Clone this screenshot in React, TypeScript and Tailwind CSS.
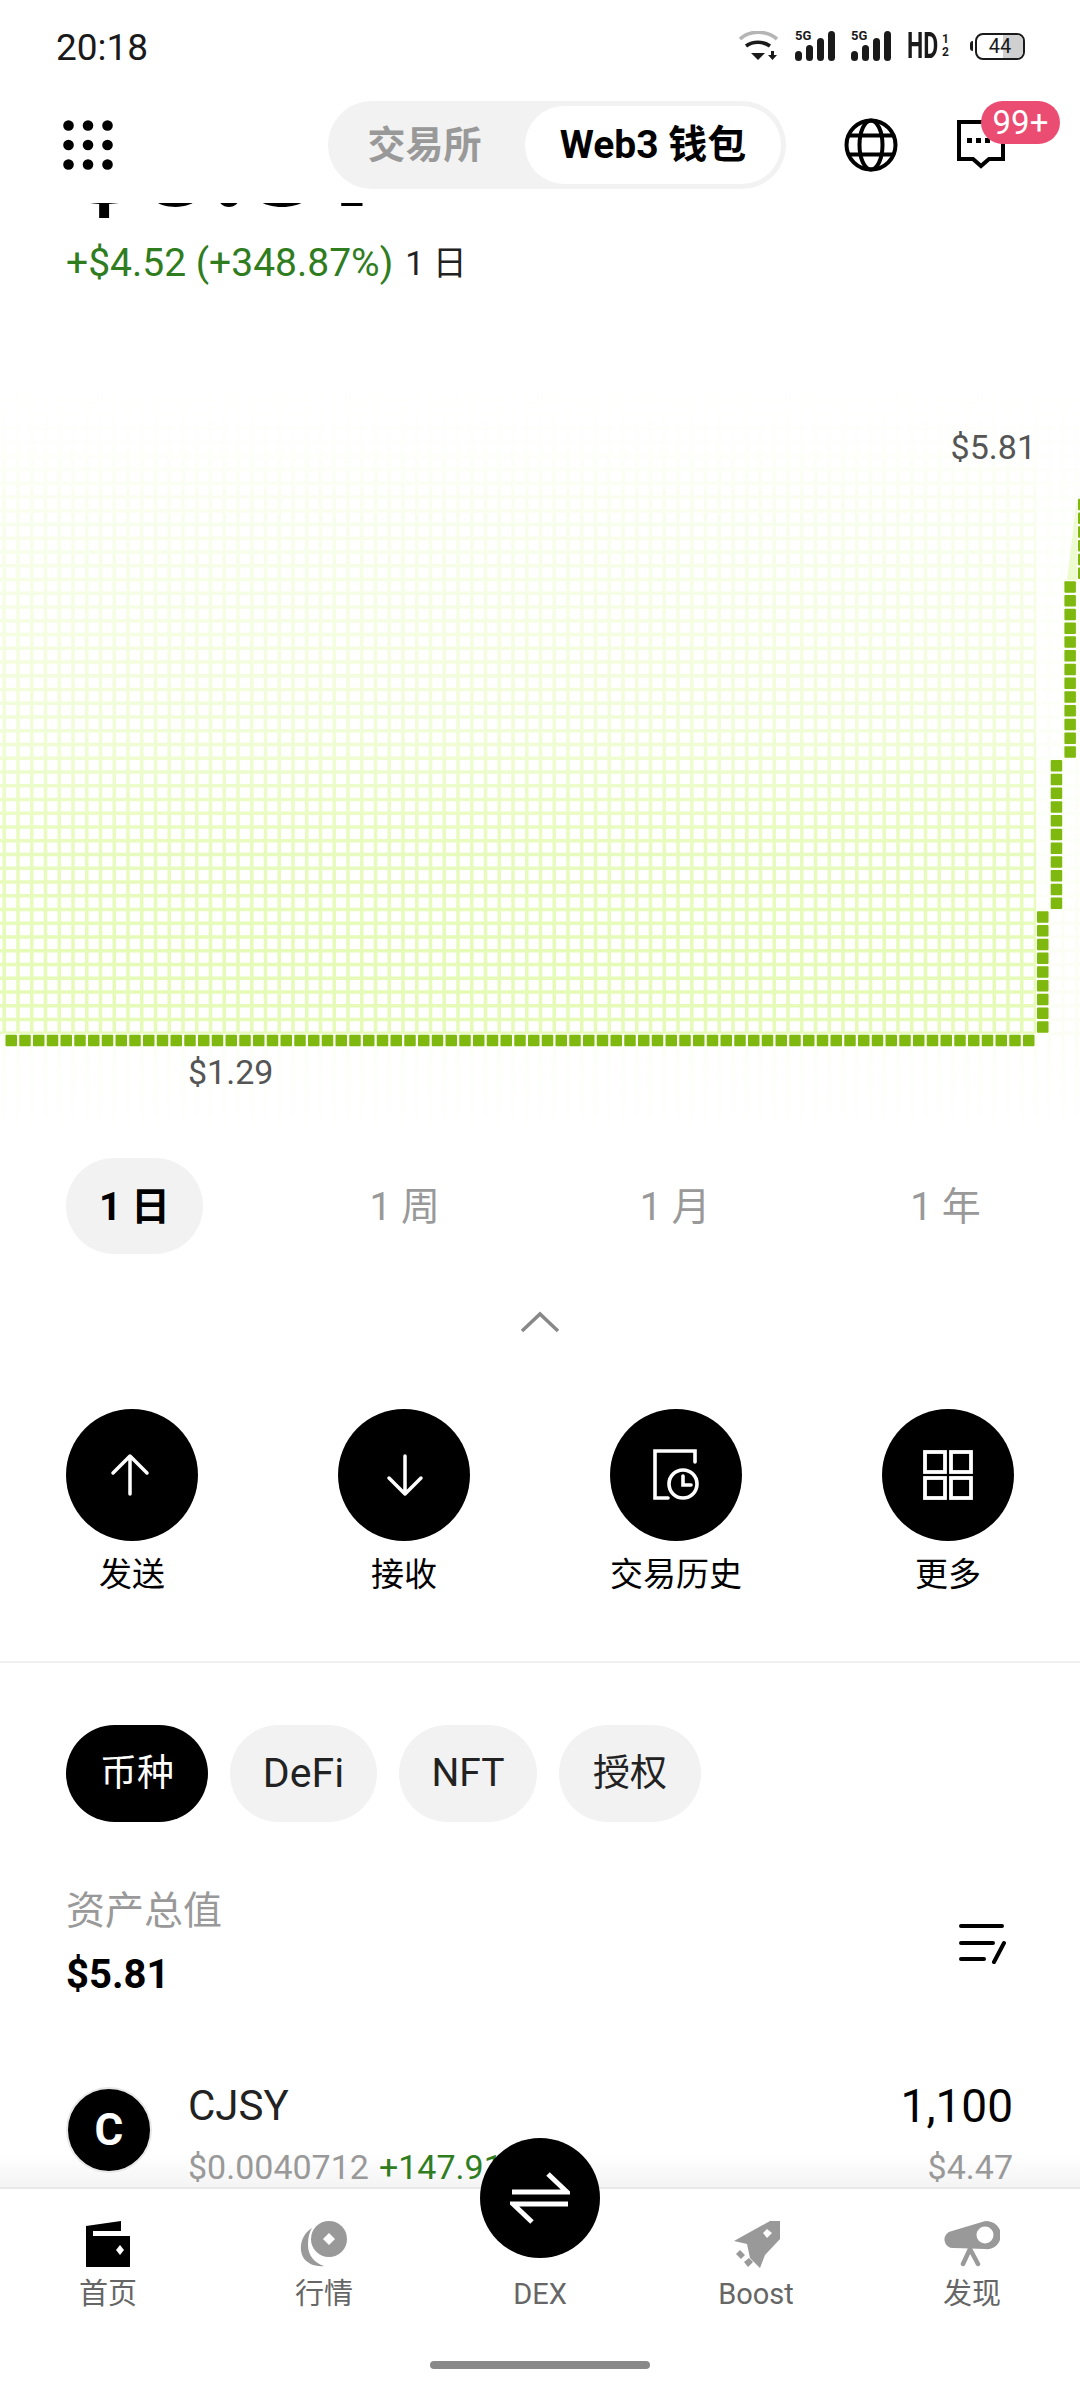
import React from 'react';

const cjk = "font-['Roboto','Noto_Sans_CJK_SC',sans-serif]";

// pitch of the pixel chart, measured off the bottom row
const PITCH = 13.75;
const CELL = 11.5;
const CHART_TOP = 380;

// rising part of the line: x of the column, then first and last row above the base row
const runs = [
  { x: 1037, from: 1, to: 9 },
  { x: 1050.7, from: 10, to: 20 },
  { x: 1064.4, from: 21, to: 33 },
  { x: 1078, from: 34, to: 39 },
];

const PriceChart = () => {
  const width = 1080;
  const height = 750;
  const cols = Array.from({ length: 80 }, (_, i) => i);
  const lines = Array.from({ length: 56 }, (_, i) => i);
  const baseY = 1034.7 - CHART_TOP;
  const cells: { x: number; y: number }[] = [];
  for (let i = 0; i < 75; i++) cells.push({ x: 5.5 + i * PITCH, y: baseY });
  runs.forEach((r) => {
    for (let n = r.from; n <= r.to; n++) {
      cells.push({ x: r.x, y: baseY - n * PITCH + 0.2 });
    }
  });
  const grid = (
    <>
      {cols.map((i) => (
        <rect key={'v' + i} x={2.5 + i * PITCH} y={0} width={3.5} height={height} fill="#e6fbb8" />
      ))}
      {lines.map((i) => (
        <rect key={'h' + i} x={0} y={baseY - 3.2 - i * PITCH} width={width} height={3.5} fill="#e6fbb8" />
      ))}
    </>
  );
  return (
    <svg width={width} height={height} viewBox={`0 0 ${width} ${height}`} className="block">
      <defs>
        <linearGradient id="strong" x1="0" y1="0" x2="0" y2="1">
          <stop offset="0.09" stopColor="#fff" stopOpacity="0" />
          <stop offset="0.15" stopColor="#fff" stopOpacity="0.12" />
          <stop offset="0.32" stopColor="#fff" stopOpacity="0.3" />
          <stop offset="0.53" stopColor="#fff" stopOpacity="0.5" />
          <stop offset="0.69" stopColor="#fff" stopOpacity="0.88" />
          <stop offset="0.87" stopColor="#fff" stopOpacity="1" />
        </linearGradient>
        <linearGradient id="faint" x1="0" y1="0" x2="0" y2="1">
          <stop offset="0" stopColor="#fff" stopOpacity="0" />
          <stop offset="0.2" stopColor="#fff" stopOpacity="0.08" />
          <stop offset="0.88" stopColor="#fff" stopOpacity="0.14" />
          <stop offset="1" stopColor="#fff" stopOpacity="0" />
        </linearGradient>
        <mask id="under">
          <rect x="0" y="0" width="1036" height={baseY - 1} fill="url(#strong)" />
        </mask>
        <mask id="rest">
          <rect x="0" y="0" width={width} height={height} fill="url(#faint)" />
        </mask>
      </defs>
      <g mask="url(#rest)">{grid}</g>
      <g mask="url(#under)">{grid}</g>
      {/* pale wedge left of the last step */}
      <path d="M1077 118 1067 200h10z" fill="#e9fbc2" opacity="0.8" />
      {cells.map((c, i) => (
        <rect key={i} x={c.x} y={c.y} width={CELL} height={CELL} rx={1} fill="#7fb80e" />
      ))}
    </svg>
  );
};

const Dots = () => (
  <svg width="50" height="50" viewBox="0 0 50 50" fill="#000">
    {[5.5, 25, 44.5].map((y) =>
      [5.5, 25, 44.5].map((x) => <circle key={`${x}-${y}`} cx={x} cy={y} r="5.3" />),
    )}
  </svg>
);

const Globe = () => (
  <svg width="54" height="54" viewBox="0 0 54 54" fill="none" stroke="#000" strokeWidth="4">
    <circle cx="27" cy="27" r="24.5" />
    <ellipse cx="27" cy="27" rx="11.5" ry="24.5" />
    <path d="M5 17.5h44M5 36.5h44" />
  </svg>
);

const Message = () => (
  <svg width="50" height="50" viewBox="0 0 50 50">
    <path d="M3 3h44v37H33l-8 7-8-7H3z" fill="none" stroke="#000" strokeWidth="4" />
    <rect x="11" y="19" width="5" height="5" />
    <rect x="20" y="19" width="5" height="5" />
    <rect x="29" y="19" width="5" height="5" />
  </svg>
);

const Wifi = () => (
  <svg width="40" height="30" viewBox="0 0 40 30">
    <path d="M1 8C11-1 27-1 38 8" fill="none" stroke="#b5b5b5" strokeWidth="3.6" />
    <path d="M7 15c7-5 17-5 24 0" fill="none" stroke="#1a1a1a" strokeWidth="3.6" />
    <path d="M12 22h14l-7 7z" fill="#1a1a1a" />
    <path d="M32 20h3v4h3l-4.500 5-4.500-5h3z" fill="#1a1a1a" />
  </svg>
);

const Signal = () => (
  <div className="relative w-[41px] h-[30px]">
    <span className="absolute left-0 top-[-3px] text-[13px] leading-[16px] font-bold text-[#1a1a1a] font-['Roboto',sans-serif]">5G</span>
    <svg width="41" height="30" viewBox="0 0 41 30" fill="#1a1a1a">
      <rect x="0" y="20" width="7" height="10" rx="3.500" />
      <rect x="11" y="14" width="7" height="16" rx="3.500" />
      <rect x="22" y="7" width="7" height="23" rx="3.500" />
      <rect x="33" y="0" width="7" height="30" rx="3.500" />
    </svg>
  </div>
);

const StatusBar = () => (
  <div className="h-[92px] flex items-center justify-between pl-[56px] pr-[55px] text-[#1a1a1a]">
    <span className={`text-[37px] leading-none pt-[2px] ${cjk}`}>20:18</span>
    <div className="flex items-center">
      <Wifi />
      <div className="ml-[16px]"><Signal /></div>
      <div className="ml-[15px]"><Signal /></div>
      <div className="ml-[15px] w-[46px] flex items-center font-['Roboto',sans-serif] font-bold">
        <span className="text-[36px] leading-none scale-x-[0.64] origin-left w-[33px]">HD</span>
        <span className="flex flex-col text-[12px] leading-[13px] font-bold w-[11px] items-center">
          <span>1</span>
          <span>2</span>
        </span>
      </div>
      <div className="ml-[17px] flex items-center">
        <span className="w-[3px] h-[10px] rounded-l-full bg-[#1a1a1a] mr-[2px]" />
        <div className="relative w-[50px] h-[27px] rounded-[8px] border-[2.500px] border-[#1a1a1a] overflow-hidden flex items-center justify-center">
          <span className="absolute right-0 top-0 bottom-0 w-[20px] bg-[#d0d0d0]" />
          <span className="relative text-[20px] leading-none font-normal font-['Roboto',sans-serif]">44</span>
        </div>
      </div>
    </div>
  </div>
);

const NavBar = () => (
  <div className="relative h-[111px]">
    <div className="absolute left-[63px] top-[28px]"><Dots /></div>
    <div className="absolute left-[328px] top-[9px] w-[458px] h-[88px] rounded-full bg-[#f2f2f2] flex items-center p-[5px]">
      <div className={`w-[181px] pl-[2px] text-center text-[38px] font-semibold text-[#999] ${cjk}`}>交易所</div>
      <div className={`flex-1 h-[78px] ml-[11px] rounded-full bg-white flex items-center justify-center text-[39px] font-bold text-black whitespace-nowrap ${cjk}`}>Web3 钱包</div>
    </div>
    <div className="absolute left-[844px] top-[26px]"><Globe /></div>
    <div className="absolute left-[956px] top-[27px]"><Message /></div>
    <div className={`absolute left-[981px] top-[9px] w-[79px] h-[43px] rounded-full bg-[#eb4c72] flex items-center justify-center text-white text-[33px] leading-none ${cjk}`}>99+</div>
  </div>
);

const ArrowUp = () => (
  <svg width="40" height="44" viewBox="0 0 40 44" fill="none" stroke="#fff" strokeWidth="3.500" strokeLinecap="round" strokeLinejoin="round" className="-translate-x-[2px]">
    <path d="M20 41V3M3 20 20 3l17 17" />
  </svg>
);
const ArrowDown = () => (
  <svg width="40" height="44" viewBox="0 0 40 44" fill="none" stroke="#fff" strokeWidth="3.500" strokeLinecap="round" strokeLinejoin="round" className="translate-x-[1px]">
    <path d="M20 3v38M4 25l16 16 16-16" />
  </svg>
);
const History = () => (
  <svg width="46" height="52" viewBox="0 0 46 52" fill="none" stroke="#fff" strokeWidth="3.600" strokeLinecap="round">
    <path d="M15 49H2V2h40v11" />
    <circle cx="30" cy="35" r="14" />
    <path d="M30 27v9h8" />
  </svg>
);
const Grid4 = () => (
  <svg width="50" height="50" viewBox="0 0 50 50" fill="none" stroke="#fff" strokeWidth="3.800">
    <rect x="2" y="2" width="20" height="20" />
    <rect x="28" y="2" width="20" height="20" />
    <rect x="2" y="28" width="20" height="20" />
    <rect x="28" y="28" width="20" height="20" />
  </svg>
);

const actions = [
  { label: '发送', icon: <ArrowUp /> },
  { label: '接收', icon: <ArrowDown /> },
  { label: '交易历史', icon: <History /> },
  { label: '更多', icon: <Grid4 /> },
];

const SortIcon = () => (
  <svg width="50" height="42" viewBox="0 0 50 42" fill="none" stroke="#000" strokeWidth="4" strokeLinecap="round">
    <path d="M3 4h41M3 21h32M3 37h23M46 21 36 40" />
  </svg>
);

const TabWallet = () => (
  <svg width="46" height="46" viewBox="0 0 46 46">
    <path d="M1 5 36 0v10H8v5h37v31H1z" fill="#000" />
    <path d="M35 24l4 5-4 5-4-5z" fill="#fff" />
  </svg>
);
const TabCoin = () => (
  <svg width="48" height="46" viewBox="0 0 48 46">
    <path d="M12 7C2 13-2 26 3 36c4 7 13 10 21 9-9-3-16-10-16-21 0-7 1-12 4-17z" fill="#999" />
    <circle cx="29" cy="18" r="18" fill="#999" />
    <path d="M29 12l6 6-6 6-6-6z" fill="#fff" />
  </svg>
);
const TabRocket = () => (
  <svg width="50" height="47" viewBox="0 0 50 47" fill="#999">
    <path d="M39 0h10v18L34 34l-5 13-10-10-3-14L3 20z" />
    <path d="M36 8l5 4-5 5-4-5z" fill="#fff" />
    <path d="M5 33l4-4 5 5-4 4zM13 41l5-4 4 4-5 5z" />
  </svg>
);
const TabScope = () => (
  <svg width="56" height="46" viewBox="0 0 56 46">
    <path d="M8 10 38 1a14 14 0 1 1 3 27L10 27A8.500 8.500 0 0 1 8 10z" fill="#999" />
    <circle cx="41" cy="14" r="8.500" fill="#fff" />
    <path d="M26 28 19 43M26 28l8 15" fill="none" stroke="#999" strokeWidth="4.500" strokeLinecap="round" />
  </svg>
);

const tabs = [
  { label: '首页', icon: <TabWallet /> },
  { label: '行情', icon: <TabCoin /> },
  { label: 'DEX', icon: <div className="w-[46px] h-[46px]" /> },
  { label: 'Boost', icon: <TabRocket /> },
  { label: '发现', icon: <TabScope /> },
];

export default function App() {
  return (
    <div className={`relative w-[1080px] h-[2400px] bg-white overflow-hidden flex flex-col ${cjk}`}>
      <StatusBar />
      <NavBar />

      {/* scroll area: balance is already pushed under the header */}
      <div className="relative flex-1 overflow-hidden">
        <div className="absolute left-0 right-0 bottom-0 h-[34px] bg-gradient-to-b from-white to-[#f4f4f4]" />

        <div className="h-[177px] overflow-hidden relative">
          <div className="absolute inset-0 leading-none font-black text-black font-['Inter',sans-serif]">
            <span className="absolute left-[46px] top-[-147px] text-[170px]">$</span>
            <span className="absolute left-[139px] top-[-90px] text-[108px]">5.81</span>
          </div>
          <div className="absolute left-[66px] top-[37px] flex items-center text-[39px] leading-[46px]">
            <span className="text-[#2f7d1e]">+$4.52 (+348.87%)</span>
            <span className="ml-[12px] text-[#222] text-[34px]">1 日</span>
          </div>
        </div>

        <div className="relative h-[750px]">
          <PriceChart />
          <span className="absolute right-[44px] top-[47px] text-[34px] leading-[40px] text-[#555]">$5.81</span>
          <span className="absolute left-[188px] top-[672px] text-[34px] leading-[40px] text-[#555]">$1.29</span>
        </div>

        <div className="flex justify-between px-[66px] mt-[28px] text-[39px]">
          <div className="w-[137px] h-[96px] pt-[3px] rounded-full bg-[#f2f2f2] flex items-center justify-center font-bold text-black">1 日</div>
          <div className="w-[137px] h-[96px] pt-[3px] flex items-center justify-center text-[#999]">1 周</div>
          <div className="w-[137px] h-[96px] pt-[3px] flex items-center justify-center text-[#999]">1 月</div>
          <div className="w-[137px] h-[96px] pt-[3px] flex items-center justify-center text-[#999]">1 年</div>
        </div>

        <div className="flex justify-center mt-[57px]">
          <svg width="40" height="22" viewBox="0 0 40 22" fill="none" stroke="#888" strokeWidth="3.500">
            <path d="M2 20 20 3l18 17" />
          </svg>
        </div>

        <div className="flex justify-between px-[66px] mt-[76px]">
          {actions.map((a) => (
            <div key={a.label} className="w-[132px] flex flex-col items-center">
              <div className="w-[132px] h-[132px] rounded-full bg-black flex items-center justify-center">{a.icon}</div>
              <span className="mt-[14px] text-[33px] leading-[40px] text-black whitespace-nowrap">{a.label}</span>
            </div>
          ))}
        </div>

        <div className="h-[2px] bg-[#f0f0f0] mt-[66px]" />

        <div className="flex gap-[22px] px-[66px] mt-[62px] leading-none">
          <div className="w-[142px] h-[97px] rounded-full bg-black text-white text-[37px] flex items-center justify-center">币种</div>
          <div className="w-[147px] h-[97px] rounded-full bg-[#f2f2f2] text-[#222] text-[41px] flex items-center justify-center">DeFi</div>
          <div className="w-[138px] h-[97px] rounded-full bg-[#f2f2f2] text-[#222] text-[39px] flex items-center justify-center">NFT</div>
          <div className="w-[142px] h-[97px] rounded-full bg-[#f2f2f2] text-[#222] text-[37px] flex items-center justify-center">授权</div>
        </div>

        <div className="flex items-center justify-between pl-[66px] pr-[72px] mt-[62px]">
          <div>
            <div className="text-[39px] leading-[54px] text-[#999]">资产总值</div>
            <div className="mt-[10px] text-[40px] leading-[54px] font-bold text-black">$5.81</div>
          </div>
          <SortIcon />
        </div>

        <div className="relative flex items-center justify-between pl-[66px] pr-[67px] mt-[69px]">
          <div className="flex items-center">
            <div className="w-[86px] h-[86px] rounded-full bg-black border-[2px] border-[#e8e8e8] flex items-center justify-center text-white text-[44px] font-bold leading-none">C</div>
            <div className="ml-[36px] pt-[10px]">
              <div className="text-[42px] leading-[50px] text-[#222]">CJSY</div>
              <div className="mt-[14px] text-[34px] leading-[44px] whitespace-nowrap">
                <span className="text-[#999]">$0.0040712</span>
                <span className="ml-[10px] text-[#2f7d1e]">+147.91%</span>
              </div>
            </div>
          </div>
          <div className="text-right pt-[10px]">
            <div className="text-[46px] leading-[50px] text-black">1,100</div>
            <div className="mt-[14px] text-[34px] leading-[44px] text-[#999]">$4.47</div>
          </div>
        </div>
      </div>

      <div className="relative h-[213px] bg-white border-t-[2px] border-[#e8e8e8] shrink-0">
        <div className="grid grid-cols-5 pt-[31px]">
          {tabs.map((t) => (
            <div key={t.label} className="flex flex-col items-center">
              <div className="h-[48px] flex items-center justify-center">{t.icon}</div>
              <span className="mt-[6px] text-[29px] leading-[40px] text-[#666]">{t.label}</span>
            </div>
          ))}
        </div>
        <div className="absolute left-[430px] top-[172px] w-[220px] h-[8px] rounded-full bg-[#888]" />
      </div>

      <div className="absolute left-[480px] top-[2138px] w-[120px] h-[120px] rounded-full bg-black flex items-center justify-center">
        <svg width="60" height="54" viewBox="0 0 60 54" fill="none" stroke="#fff" strokeWidth="5">
          <path d="M2 21h55L38 3M58 33H3l19 18" />
        </svg>
      </div>
    </div>
  );
}
